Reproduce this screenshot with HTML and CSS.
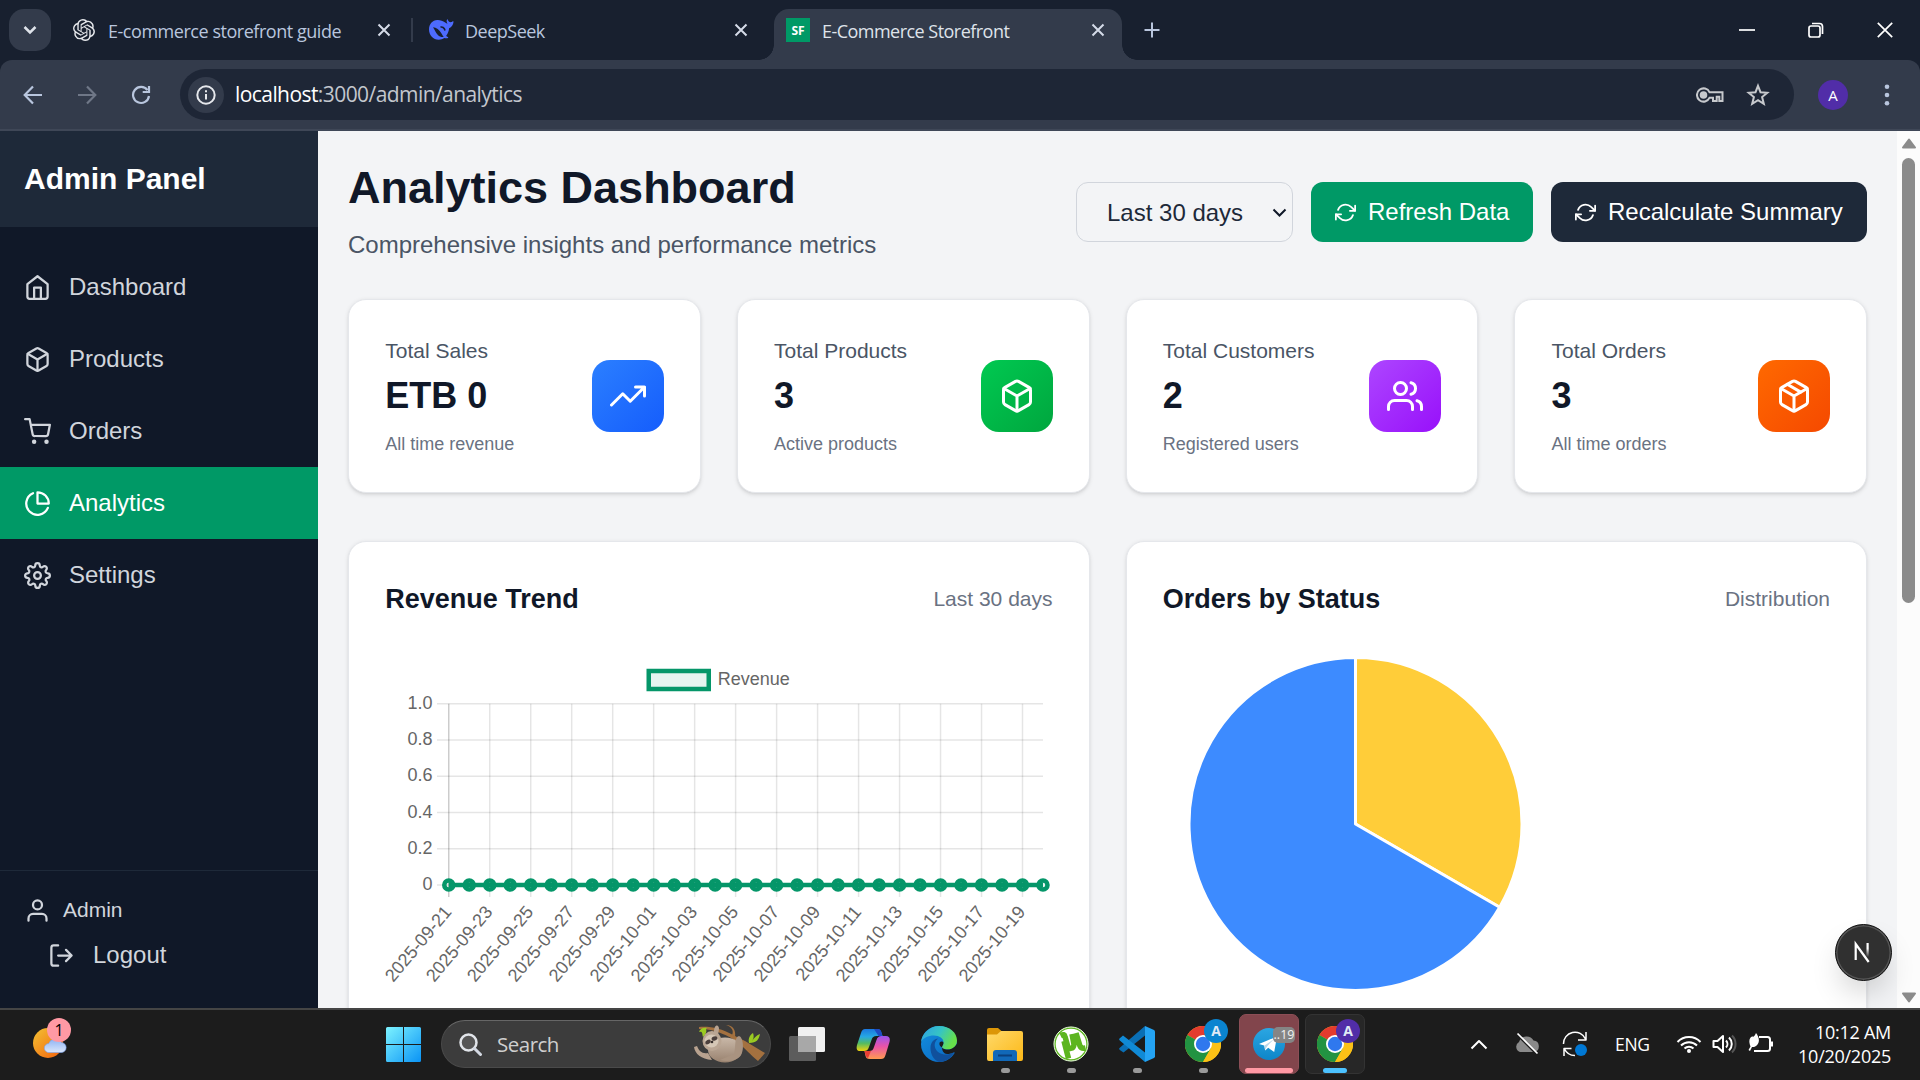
FILE: index.html
```html
<!DOCTYPE html>
<html lang="en">
<head>
<meta charset="utf-8">
<title>E-Commerce Storefront</title>
<link rel="stylesheet" href="styles.css">
</head>
<body>
<svg class="defs" width="0" height="0">
  <defs>
    <symbol id="i-x" viewBox="0 0 14 14"><path d="M1.500 1.500l11 11M12.500 1.500l-11 11"/></symbol>
    <symbol id="i-box" viewBox="0 0 24 24"><path d="M21 16V8a2 2 0 0 0-1-1.730l-7-4a2 2 0 0 0-2 0l-7 4A2 2 0 0 0 3 8v8a2 2 0 0 0 1 1.730l7 4a2 2 0 0 0 2 0l7-4A2 2 0 0 0 21 16z"/><path d="M3.270 6.960L12 12.010l8.730-5.050M12 22.080V12"/></symbol>
    <symbol id="i-refresh" viewBox="0 0 24 24"><path d="M23 4v6h-6M1 20v-6h6"/><path d="M3.510 9a9 9 0 0 1 14.850-3.360L23 10M1 14l4.640 4.360A9 9 0 0 0 20.490 15"/></symbol>
    <symbol id="i-chrome" viewBox="0 0 36 36">
      <circle cx="18" cy="18" r="18" fill="#fbc116"/>
      <path d="M18 18L2.400 9A18 18 0 0 1 33.600 9H18z" fill="#e33b2e"/>
      <path d="M2.400 9A18 18 0 0 0 18 36l7.800-13.500L18 18z" fill="#229342"/>
      <path d="M18 9h15.600A18 18 0 0 1 18 36l7.800-13.500z" fill="#fbc116"/>
      <circle cx="18" cy="18" r="9" fill="#fff"/><circle cx="18" cy="18" r="7.200" fill="#2f78ee"/>
    </symbol>
    <linearGradient id="g-win" x1="0" y1="0" x2="1" y2="1"><stop offset="0" stop-color="#7df3ff"/><stop offset="1" stop-color="#0a93f5"/></linearGradient>
    <linearGradient id="g-sun" x1="0" y1="0" x2="1" y2="1"><stop offset="0" stop-color="#f3c233"/><stop offset="1" stop-color="#f2600c"/></linearGradient>
    <linearGradient id="g-cloud" x1="0" y1="0" x2="0" y2="1"><stop offset="0" stop-color="#8fb3f3"/><stop offset="1" stop-color="#dbe7fb"/></linearGradient>
    <linearGradient id="g-cpa" x1="0" y1="0" x2="0" y2="1"><stop offset="0" stop-color="#1b78e0"/><stop offset=".35" stop-color="#26a8e4"/><stop offset=".65" stop-color="#54bb62"/><stop offset="1" stop-color="#f2d30c"/></linearGradient>
    <linearGradient id="g-cpb" x1="0" y1="0" x2="0" y2="1"><stop offset="0" stop-color="#9a55ee"/><stop offset=".45" stop-color="#e953a8"/><stop offset="1" stop-color="#ff9a50"/></linearGradient>
    <linearGradient id="g-edge" x1="0" y1="0" x2="1" y2=".4"><stop offset="0" stop-color="#2d9fe6"/><stop offset=".55" stop-color="#36c4c4"/><stop offset="1" stop-color="#67e04a"/></linearGradient>
    <linearGradient id="g-edge2" x1="0" y1="0" x2="1" y2="1"><stop offset="0" stop-color="#1390df"/><stop offset="1" stop-color="#0a64bf"/></linearGradient>
    <linearGradient id="g-fold" x1="0" y1="0" x2="1" y2="1"><stop offset="0" stop-color="#ffd96a"/><stop offset="1" stop-color="#fcb817"/></linearGradient>
    <linearGradient id="g-tg" x1="0" y1="0" x2="0" y2="1"><stop offset="0" stop-color="#2ba6e2"/><stop offset="1" stop-color="#0d86c9"/></linearGradient>
    <linearGradient id="g-fur" x1="0" y1="0" x2="0" y2="1"><stop offset="0" stop-color="#c9b8a8"/><stop offset="1" stop-color="#99826f"/></linearGradient>
    <linearGradient id="g-n" x1="0" y1="0" x2="0" y2="1"><stop offset="0" stop-color="#fff"/><stop offset=".4" stop-color="#fff"/><stop offset="1" stop-color="#fff" stop-opacity="0"/></linearGradient>
  </defs>
</svg>

<header class="browser">
  <div class="tabstrip">
    <div class="tab-search"><svg width="14" height="10" viewBox="0 0 14 10"><path d="M1.500 2l5.500 5.500L12.500 2"/></svg></div>
    <div class="tab tab-first">
      <svg class="fav gpt" width="22" height="22" viewBox="0 0 24 24"><path d="M22.280 9.820a5.980 5.980 0 0 0-.52-4.910 6.050 6.050 0 0 0-6.510-2.900A6.070 6.070 0 0 0 4.980 4.180a5.980 5.980 0 0 0-4 2.900 6.050 6.050 0 0 0 .74 7.100 5.980 5.980 0 0 0 .51 4.910 6.050 6.050 0 0 0 6.510 2.900A5.980 5.980 0 0 0 13.260 24a6.060 6.060 0 0 0 5.770-4.210 5.990 5.990 0 0 0 4-2.900 6.060 6.060 0 0 0-.75-7.070zm-9.020 12.610a4.480 4.480 0 0 1-2.880-1.040l.14-.08 4.780-2.760a.8.8 0 0 0 .39-.68v-6.740l2.020 1.170a.07.07 0 0 1 .04.05v5.580a4.500 4.500 0 0 1-4.490 4.500zM3.600 18.300a4.470 4.470 0 0 1-.54-3.010l.14.08 4.780 2.760a.77.77 0 0 0 .78 0l5.840-3.370v2.330a.08.08 0 0 1-.03.06L9.740 19.950a4.500 4.500 0 0 1-6.140-1.650zM2.340 7.900a4.490 4.490 0 0 1 2.370-1.970V11.600a.77.77 0 0 0 .39.680l5.810 3.350-2.020 1.170a.08.08 0 0 1-.07 0l-4.830-2.790A4.500 4.500 0 0 1 2.340 7.870zm16.600 3.860l-5.840-3.390L15.120 7.200a.08.08 0 0 1 .07 0l4.830 2.790a4.490 4.490 0 0 1-.68 8.100v-5.680a.79.79 0 0 0-.4-.65zm2.010-3.020l-.14-.09-4.770-2.780a.78.78 0 0 0-.79 0L9.410 9.230V6.900a.07.07 0 0 1 .03-.06l4.830-2.790a4.500 4.500 0 0 1 6.680 4.660zM8.310 12.860l-2.020-1.160a.08.08 0 0 1-.04-.06V6.070a4.500 4.500 0 0 1 7.380-3.450l-.14.08L8.700 5.460a.8.8 0 0 0-.39.680zm1.100-2.360L12 9l2.600 1.500v3L12 15l-2.600-1.500z"/></svg>
      <span class="tab-title t1">E-commerce storefront guide</span>
      <svg class="close"><use href="#i-x"/></svg>
    </div>
    <div class="tab-sep"></div>
    <div class="tab tab-second">
      <svg class="fav" width="25" height="22" viewBox="0 0 25 22"><path d="M24.300 2.300c-.4-.2-1.200.6-1.900.8-1.700.3-2.700-.5-3.400-1.900-.2-.7-.5-1.100-.8-.9-.9.900-.7 3.100.3 4.400-.8-.1-1.500-.6-2.300-1.200C13.900 1.800 11.200.9 8.300 1 3.400 1.200 0 5 0 10.500 0 16.300 4.300 20.800 9.700 20.800c2.200 0 4-.5 5.500-1.700 1.500.3 3 .3 3.800-.2.500-.4.300-.7-.2-.9-.8-.3-1.300-.7-1.600-1.300 1.800-2.200 2.700-4.800 2.900-7.400 2.500-1 4.100-3.200 4.400-6.200 0-.4 0-.7-.2-.8z" fill="#4d6bfe"/><path d="M4 8.200c3.300.2 6.400 2.600 8.500 6.200 1.100 1.800 1.700 2.900 2.300 3.600-2.300.4-4.200-.4-5.900-2C6.700 13.900 5.800 10.600 4 8.200z" fill="#18202f"/><path d="M11.500 8.300c1.400-.8 4 .2 4.500 3.200" stroke="#18202f" stroke-width="1.600" fill="none"/></svg>
      <span class="tab-title t2">DeepSeek</span>
      <svg class="close"><use href="#i-x"/></svg>
    </div>
    <div class="tab tab-active">
      <span class="fav-sf">SF</span>
      <span class="tab-title t3">E-Commerce Storefront</span>
      <svg class="close"><use href="#i-x"/></svg>
    </div>
    <svg class="newtab" width="16" height="16" viewBox="0 0 16 16"><path d="M8 0.500v15M.5 8h15"/></svg>
    <div class="winctl">
      <svg viewBox="0 0 16 16"><path d="M0 8h16"/></svg>
      <svg viewBox="0 0 16 16"><rect x="1" y="4" width="11" height="11" rx="2"/><path d="M4 1.500h7.500a3 3 0 0 1 3 3V12"/></svg>
      <svg viewBox="0 0 16 16"><path d="M.8.8l14.400 14.400M15.200.8L.8 15.200"/></svg>
    </div>
  </div>
  <div class="toolbar">
    <div class="navicons">
      <svg viewBox="0 0 20 20"><path d="M19 10H2M10 1.500L1.700 10l8.300 8.500"/></svg>
      <svg class="dim" viewBox="0 0 20 20"><path d="M1 10h17M10 1.500l8.300 8.500-8.300 8.500"/></svg>
      <svg viewBox="0 0 20 20"><path d="M16.500 5.200A8 8 0 1 0 18 11"/><path d="M18 1v6h-6.300" /></svg>
    </div>
    <div class="address">
      <span class="info"><svg width="20" height="20" viewBox="0 0 20 20"><circle cx="10" cy="10" r="8.700"/><path d="M10 9v5.500M10 5.200v2"/></svg></span>
      <span class="url"><b>localhost</b>:3000/admin/analytics</span>
      <svg class="key" width="28" height="18" viewBox="0 0 28 18"><path d="M13.600 6.300H26.500V15h-3.200v-4.200h-2.600V15h-3.700v-3.300h-3.400a6.600 6.600 0 1 1 0-5.400z"/><circle cx="7.500" cy="9" r="2.800" fill="#c7c9cd"/></svg>
      <svg class="star" width="24" height="24" viewBox="0 0 24 24"><path d="M12 2.800l2.500 6.400 6.800.5-5.200 4.400 1.700 6.700L12 17.100l-5.800 3.700 1.700-6.700-5.200-4.400 6.800-.5z"/></svg>
    </div>
    <span class="avatar">A</span>
    <svg class="dots" width="6" height="22" viewBox="0 0 6 22"><circle cx="3" cy="2.700" r="2.300"/><circle cx="3" cy="11" r="2.300"/><circle cx="3" cy="19.300" r="2.300"/></svg>
  </div>
</header>

<div class="page">
  <aside class="sidebar">
    <div class="brand">Admin Panel</div>
    <nav class="nav">
      <a><svg class="ic" viewBox="0 0 24 24"><path d="M3 9l9-7 9 7v11a2 2 0 0 1-2 2H5a2 2 0 0 1-2-2z"/><path d="M9 22V12h6v10"/></svg>Dashboard</a>
      <a><svg class="ic"><use href="#i-box"/></svg>Products</a>
      <a><svg class="ic" viewBox="0 0 24 24"><circle cx="9" cy="21" r="1"/><circle cx="20" cy="21" r="1"/><path d="M1 1h4l2.680 13.390a2 2 0 0 0 2 1.610h9.720a2 2 0 0 0 2-1.610L23 6H6"/></svg>Orders</a>
      <a class="active"><svg class="ic" viewBox="0 0 24 24"><path d="M21.210 15.890A10 10 0 1 1 8 2.830"/><path d="M22 12A10 10 0 0 0 12 2v10z"/></svg>Analytics</a>
      <a><svg class="ic" viewBox="0 0 24 24"><circle cx="12" cy="12" r="3"/><path d="M19.400 15a1.650 1.650 0 0 0 .33 1.820l.06.06a2 2 0 0 1 0 2.830 2 2 0 0 1-2.830 0l-.06-.06a1.650 1.650 0 0 0-1.820-.33 1.650 1.650 0 0 0-1 1.510V21a2 2 0 0 1-2 2 2 2 0 0 1-2-2v-.09A1.650 1.650 0 0 0 9 19.400a1.650 1.650 0 0 0-1.820.33l-.06.06a2 2 0 0 1-2.830 0 2 2 0 0 1 0-2.830l.06-.06a1.650 1.650 0 0 0 .33-1.820 1.650 1.650 0 0 0-1.510-1H3a2 2 0 0 1-2-2 2 2 0 0 1 2-2h.09A1.650 1.650 0 0 0 4.600 9a1.650 1.650 0 0 0-.33-1.820l-.06-.06a2 2 0 0 1 0-2.830 2 2 0 0 1 2.830 0l.06.06a1.650 1.650 0 0 0 1.820.33H9a1.650 1.650 0 0 0 1-1.510V3a2 2 0 0 1 2-2 2 2 0 0 1 2 2v.09a1.650 1.650 0 0 0 1 1.510 1.650 1.650 0 0 0 1.820-.33l.06-.06a2 2 0 0 1 2.830 0 2 2 0 0 1 0 2.830l-.06.06a1.650 1.650 0 0 0-.33 1.820V9a1.650 1.650 0 0 0 1.510 1H21a2 2 0 0 1 2 2 2 2 0 0 1-2 2h-.09a1.650 1.650 0 0 0-1.510 1z"/></svg>Settings</a>
    </nav>
    <div class="account">
      <div class="who"><svg class="ic" viewBox="0 0 24 24"><path d="M20 21v-2a4 4 0 0 0-4-4H8a4 4 0 0 0-4 4v2"/><circle cx="12" cy="7" r="4"/></svg>Admin</div>
      <div class="logout"><svg class="ic" viewBox="0 0 24 24"><path d="M9 21H5a2 2 0 0 1-2-2V5a2 2 0 0 1 2-2h4M16 17l5-5-5-5M21 12H9"/></svg>Logout</div>
    </div>
  </aside>

  <main class="main">
    <div class="head">
      <div>
        <h1>Analytics Dashboard</h1>
        <p class="sub">Comprehensive insights and performance metrics</p>
      </div>
      <div class="actions">
        <div class="select">Last 30 days<svg width="15" height="10" viewBox="0 0 15 10"><path d="M1.500 1.500l6 6 6-6"/></svg></div>
        <div class="btn green"><svg class="ic"><use href="#i-refresh"/></svg>Refresh Data</div>
        <div class="btn dark"><svg class="ic"><use href="#i-refresh"/></svg>Recalculate Summary</div>
      </div>
    </div>

    <div class="stats">
      <div class="card stat"><div><div class="label">Total Sales</div><div class="value">ETB 0</div><div class="note">All time revenue</div></div>
        <div class="tile blue"><svg class="ic" viewBox="0 0 24 24"><path d="M23 6l-9.500 9.500-5-5L1 18M17 6h6v6"/></svg></div></div>
      <div class="card stat"><div><div class="label">Total Products</div><div class="value">3</div><div class="note">Active products</div></div>
        <div class="tile emerald"><svg class="ic"><use href="#i-box"/></svg></div></div>
      <div class="card stat"><div><div class="label">Total Customers</div><div class="value">2</div><div class="note">Registered users</div></div>
        <div class="tile purple"><svg class="ic" viewBox="0 0 24 24"><path d="M17 21v-2a4 4 0 0 0-4-4H5a4 4 0 0 0-4 4v2"/><circle cx="9" cy="7" r="4"/><path d="M23 21v-2a4 4 0 0 0-3-3.870M16 3.130a4 4 0 0 1 0 7.750"/></svg></div></div>
      <div class="card stat"><div><div class="label">Total Orders</div><div class="value">3</div><div class="note">All time orders</div></div>
        <div class="tile orange"><svg class="ic" viewBox="0 0 24 24"><path d="M16.500 9.400L7.500 4.210"/><path d="M21 16V8a2 2 0 0 0-1-1.730l-7-4a2 2 0 0 0-2 0l-7 4A2 2 0 0 0 3 8v8a2 2 0 0 0 1 1.730l7 4a2 2 0 0 0 2 0l7-4A2 2 0 0 0 21 16z"/><path d="M3.270 6.960L12 12.010l8.730-5.050M12 22.080V12"/></svg></div></div>
    </div>

    <div class="charts">
      <section class="card">
        <div class="card-head"><h2>Revenue Trend</h2><span>Last 30 days</span></div>
        <svg id="revenue" class="plot" width="668" height="352" viewBox="385 656 668 352"></svg>
      </section>
      <section class="card">
        <div class="card-head"><h2>Orders by Status</h2><span>Distribution</span></div>
        <svg class="plot" width="668" height="352" viewBox="1162.500 656 668 352">
          <g stroke="#fff" stroke-width="3" stroke-linejoin="round">
            <path d="M1355 824V657.500A166.500 166.500 0 0 1 1499.200 907.250Z" fill="#ffcd39"/>
            <path d="M1355 824L1499.200 907.250A166.500 166.500 0 1 1 1355 657.500Z" fill="#3d8bff"/>
          </g>
        </svg>
      </section>
    </div>
  </main>

  <div class="scrollbar">
    <svg width="16" height="11" viewBox="0 0 16 11"><path d="M8 1.500l6 8H2z"/></svg>
    <div class="thumb"></div>
    <svg class="down" width="16" height="11" viewBox="0 0 16 11"><path d="M8 9.500l6-8H2z"/></svg>
  </div>
  <div class="devbadge"><svg width="26" height="26" viewBox="0 0 26 26"><path d="M5.700 21V5L18.700 23" stroke="#fff" stroke-width="2.200" fill="none"/><rect x="16.500" y="4" width="2.200" height="14" fill="url(#g-n)"/></svg></div>
</div>

<footer class="taskbar">
  <div class="weather">
    <svg width="36" height="36" viewBox="0 0 36 36"><circle cx="15" cy="16" r="15" fill="url(#g-sun)"/><path d="M16 25.500a4.500 4.500 0 0 1-.3-9 7 7 0 0 1 12.600-1 5 5 0 0 1-.3 10z" fill="url(#g-cloud)" stroke="#7ba3ee" stroke-width=".6"/></svg>
    <span class="bubble">1</span>
  </div>
  <div class="apps">
    <svg class="win" width="35" height="35" viewBox="0 0 35 35"><path d="M1.500 0H17v17H0V1.500A1.500 1.500 0 0 1 1.500 0zM18 0h15.500A1.500 1.500 0 0 1 35 1.500V17H18zM0 18h17v17H1.500A1.500 1.500 0 0 1 0 33.500zM18 18h17v15.500a1.500 1.500 0 0 1-1.500 1.500H18z" fill="url(#g-win)"/></svg>
    <div class="search">
      <svg width="23" height="23" viewBox="0 0 23 23"><circle cx="9.500" cy="9.500" r="8" fill="#565656" stroke="#e2e5ea" stroke-width="2.500"/><path d="M15.500 15.500l6 6" stroke="#d3d8e2" stroke-width="3" stroke-linecap="round"/></svg>
      <span>Search</span>
      <svg class="sloth" width="72" height="40" viewBox="0 0 72 40">
        <path d="M5 3c10-1 22 1 34 8l12 6 20 12-7 8c-7-6-14-13-18-17C34 11 21 5 5 5z" fill="#a4713f"/>
        <path d="M38 11c2-4 0-8-6-10 7 0 10 5 9 12z" fill="#a4713f"/>
        <path d="M13 4c-4-1-7 1-8 4 4-1 3 2 4 5 3-3 4-5 3-8M55 19c-1-5 1-8 4-10 1 3 1 5-1 8 2-3 5-6 8-7-1 5-3 9-11 9z" fill="#9acb22"/>
        <path d="M20 8c0-8 5-8 5-3l-1 6h-5zM14 29C8 30 5 27 3 22l-3 1c1 7 7 12 18 13z" fill="#b8a28f"/>
        <ellipse cx="31" cy="26" rx="17" ry="12.500" fill="url(#g-fur)"/><path d="M40 30c2-7 0-17 5-18 5 1 6 19-1 22-4 3-11 4-18 2z" fill="#a99380"/>
        <ellipse cx="18" cy="17" rx="9.500" ry="10" fill="#baa694"/><ellipse cx="17.500" cy="17" rx="7" ry="6.500" fill="#d6c8b7"/>
        <ellipse cx="14" cy="18" rx="3" ry="2" fill="#4b3f3c" transform="rotate(-30 14 18)"/><ellipse cx="20.500" cy="14.500" rx="3" ry="2" fill="#4b3f3c" transform="rotate(-20 20.500 14.500)"/><circle cx="18" cy="18" r="1.300" fill="#352d2b"/>
      </svg>
    </div>
    <svg class="tv" width="36" height="34" viewBox="0 0 36 34"><rect y="9" width="27" height="25" rx="1.500" fill="#5c5c5c"/><rect x="9" width="27" height="25" rx="1.500" fill="#f0f0f0"/><rect x="9" y="9" width="18" height="16" fill="#a8a8a8"/></svg>
    <svg class="cp" width="34" height="32" viewBox="0 0 34 32"><path d="M9 1h12c3 0 3.500 1 4.500 4l1 3h-6c-3 0-4 1-5 4l-2.500 7c-1 3-2.500 4-5 4H4c-3 0-4-2-3-6L5 5c1-3 2-4 4-4z" fill="url(#g-cpa)"/><path d="M25 31H14c-3 0-4-1-4.700-4L8.500 23h4.500c3 0 4-1 5-4l2.500-7c1-3 2.500-4 5-4H30c3 0 4.500 2 3.500 6l-4 13c-1 3-2 4-4.500 4z" fill="url(#g-cpb)"/><path d="M18 1h4c2 0 3 1 3.700 4l.8 3h-4z" fill="#1d4bc4"/><path d="M8.500 23H15l-3 7c-1.500-.5-2-1.500-2.700-4z" fill="#e93f33"/></svg>
    <svg class="edge" width="36" height="36" viewBox="0 0 36 36"><circle cx="18" cy="18" r="18" fill="url(#g-edge2)"/><path d="M0 16C1 7 9 0 18 0c11 0 18 7 18 14.500 0 6-4.500 9-9 9-3 0-6-1-6-2.500 0-1 1.500-2 1.500-5 0-3.500-4-6.500-9.500-6.500C7 9.500 2 12 0 16z" fill="url(#g-edge)"/><path d="M9.500 22c0-6 4-9.500 7.500-9.500-3 2.500-4 5.500-3 9 1.500 5 7 7.500 12 7 2.500-.2 5-1 7-2C30 32 25 36 18 36 12.500 34 9.500 28 9.500 22z" fill="#10509c"/><path d="M21 21.500c-1.500-.7-3-2.500-2.500-4.500.5-2 4-2 4 0 0 2-1.700 3-1.500 4.500 1 1.500 3 2 6 2 4 0 7-2.500 9-6V28l-3-1.800c-2 1.200-5 1.800-7 1.800-3 0-5-3-5-6.500z" fill="#1c1c1c"/></svg>
    <div class="app"><svg width="36" height="33" viewBox="0 0 36 33"><path d="M0 2a2 2 0 0 1 2-2h9l4 3.500L11 9H0z" fill="#dc9607"/><path d="M0 6.500h10l4-3.500h20a2 2 0 0 1 2 2v26a2 2 0 0 1-2 2H2a2 2 0 0 1-2-2z" fill="url(#g-fold)"/><path d="M6 33v-8a3 3 0 0 1 3-3h18a3 3 0 0 1 3 3v8z" fill="#1168b8"/><path d="M11 27.500h14" stroke="#0b3f7c" stroke-width="2"/></svg></div>
    <div class="app"><svg width="36" height="36" viewBox="0 0 36 36"><circle cx="18" cy="18" r="16.300" fill="#fff" stroke="#5cb51f" stroke-width="2"/><path d="M7.500 9.500c3-1.500 4-1 4.500 1l2.500 9c1 4 6 4 6.500-1L19 8M23 7l4 13c.8 2 3 2.500 5.500 2M11 15l4.500 17.500" stroke="#5cb51f" stroke-width="5.500" fill="none"/><circle cx="18" cy="18" r="17" fill="none" stroke="#eef6e8" stroke-width="1"/></svg></div>
    <div class="app"><svg width="36" height="36" viewBox="0 0 36 36"><path d="M26 0v9.500L4.500 26.500.8 24a1.500 1.500 0 0 1 0-2.300z" fill="#0a6fb5"/><path d="M26 36L.8 14.500a1.500 1.500 0 0 1 0-2.300L4 9.500 26 26.500z" fill="#108ad6"/><path d="M26 0l9 4a2 2 0 0 1 1 1.700v24.600a2 2 0 0 1-1 1.700l-9 4z" fill="#24a3f3"/></svg></div>
    <div class="app"><svg width="36" height="36"><use href="#i-chrome"/></svg><span class="profile p-blue">A</span></div>
    <div class="app tg"><svg width="32" height="32" viewBox="0 0 32 32"><circle cx="16" cy="16" r="16" fill="url(#g-tg)"/><path d="M6 16L24 8.500l-2.800 15.500-6-4.300-3 2.800-1-5z" fill="#fff"/><path d="M12 22l-.5-4.500 9-6-6.500 7z" fill="#b9d8ea"/></svg><span class="count">..19</span></div>
    <div class="app cur"><svg width="36" height="36"><use href="#i-chrome"/></svg><span class="profile p-purple">A</span></div>
  </div>
  <div class="tray">
    <svg class="t-up" width="18" height="12" viewBox="0 0 18 12"><path d="M1.500 10.500L9 3l7.500 7.500"/></svg>
    <svg class="t-cloud" width="26" height="24" viewBox="0 0 26 24"><path d="M6 20a5.500 5.500 0 0 1-1-10 8 8 0 0 1 14.500-1.500A5.800 5.800 0 0 1 20 20z" fill="#8a8a8a" stroke="none"/><path d="M4 3.500l19 19" stroke="#1c1c1c" stroke-width="2"/><path d="M3.500 1.500l20 20" stroke-width="1.700"/></svg>
    <svg class="t-sync" width="26" height="26" viewBox="0 0 26 26"><path d="M1.500 13A11.500 11.500 0 0 1 23.500 8M24 1v8h-8M13 24.500A11.500 11.500 0 0 1 2.500 18M2 25v-7.500h7.500" stroke-width="1.500"/><circle cx="19" cy="19" r="6" fill="#0078d4" stroke="none"/></svg>
    <span class="lang">ENG</span>
    <svg class="t-wifi" width="26" height="20" viewBox="0 0 26 20"><path d="M1.500 8a16 16 0 0 1 23 0M5 11.500a11.500 11.500 0 0 1 16 0M8.500 14.500a6.500 6.500 0 0 1 9 0"/><circle cx="13" cy="17" r="2" fill="#fff" stroke="none"/></svg>
    <svg class="t-vol" width="26" height="20" viewBox="0 0 26 20"><path d="M1.500 7v6h4L11 18V2L5.500 7zM14 6.500a5 5 0 0 1 0 7M17 3.500a9 9 0 0 1 0 13"/><path d="M20 1.500a12 12 0 0 1 0 17" stroke="#555"/></svg>
    <svg class="t-bat" width="26" height="22" viewBox="0 0 26 22"><path d="M11 4h8.500a2.500 2.500 0 0 1 2.500 2.500v9a2.500 2.500 0 0 1-2.500 2.500H6"/><path d="M23.500 8.500v5" stroke-width="3"/><path d="M8 0c3 4 4 8 1.500 11.500-2 3-4.500 2.500-5.500 2.500l-2 4-1.500-1 2-3.500C-.5 6 3 3 5 3.500c0 1 2-1 3-3.500z" fill="#fff" stroke="none"/></svg>
    <div class="clock"><div>10:12 AM</div><div>10/20/2025</div></div>
  </div>
</footer>
<script src="script.js"></script>
</body>
</html>
```

FILE: script.js
```js
// Draws the revenue line chart: 30 daily points, every second date labelled.
const svg = document.getElementById('revenue');
const left = 448.75, right = 1043, top_ = 703.75, bottom = 885;
const values = new Array(30).fill(0);
const step = (right - left) / (values.length - 1);
const start = Date.UTC(2025, 8, 21);
const out = [];

['1.0', '0.8', '0.6', '0.4', '0.2', '0'].forEach((label, i) => {
  const y = top_ + (bottom - top_) * i / 5;
  out.push(`<path class="grid" d="M437 ${y}H${right}"/>`);
  out.push(`<text class="axis" x="432.500" y="${y + 5}" text-anchor="end">${label}</text>`);
});

values.forEach((v, i) => {
  if (i % 2) return;
  const x = left + step * i;
  const date = new Date(start + i * 864e5).toISOString().slice(0, 10);
  out.push(`<path class="grid${i ? '' : ' first'}" d="M${x} ${top_}V897"/>`);
  out.push(`<text class="axis" text-anchor="end" transform="translate(${x - 1} 908.5) rotate(-50)" dy="6">${date}</text>`);
});

const py = v => bottom - v * (bottom - top_);
out.push(`<polyline class="line" points="${values.map((v, i) => `${left + step * i},${py(v)}`).join(' ')}"/>`);
values.forEach((v, i) => out.push(`<circle class="point" cx="${left + step * i}" cy="${py(v)}" r="4.5"/>`));
out.push('<rect class="legend" x="648.75" y="671" width="60" height="18"/>');
out.push('<text class="axis" x="717.75" y="685">Revenue</text>');
svg.innerHTML = out.join('');
```

FILE: styles.css
```css
* { box-sizing: border-box; margin: 0; padding: 0; }
body { width: 1920px; height: 1080px; overflow: hidden; display: flex; flex-direction: column; font-family: "Liberation Sans", Arial, sans-serif; color: #101828; }
svg { display: block; flex: none; }
.defs { position: absolute; }
.ic { fill: none; stroke: currentColor; stroke-width: 2; stroke-linecap: round; stroke-linejoin: round; width: 27px; height: 27px; }

/* Browser chrome */
.browser { height: 131px; flex: none; background: #18202f; font-family: "Open Sans", "Noto Sans", sans-serif; }
.tabstrip { height: 60px; display: flex; align-items: center; padding-left: 9px; }
.tab-search { width: 42px; height: 42px; border-radius: 15px; background: #333b4b; display: flex; align-items: center; justify-content: center; }
.tab-search path { fill: none; stroke: #dfe3ea; stroke-width: 2.5; }
.tab { display: flex; align-items: center; height: 60px; }
.tab-first { width: 360px; padding: 0 20px 0 22px; }
.tab-second { width: 361px; padding: 0 26px 0 16px; }
.tab-active { width: 348px; height: 51px; align-self: flex-end; padding: 0 17px 9px 12px; background: #333b4b; border-radius: 15px 15px 0 0; position: relative; }
.tab-active::before, .tab-active::after { content: ""; position: absolute; bottom: 0; width: 15px; height: 15px; }
.tab-active::before { left: -15px; background: radial-gradient(circle at 0 0, transparent 14.5px, #333b4b 15px); }
.tab-active::after { right: -15px; background: radial-gradient(circle at 100% 0, transparent 14.5px, #333b4b 15px); }
.tab-sep { width: 2px; height: 24px; background: #333b4b; }
.gpt { fill: #e4e6ea; }
.tab-title { flex: 1; font-size: 18px; color: #b9c6de; white-space: nowrap; padding-top: 2px; }
.t1 { margin-left: 13px; letter-spacing: -.46px; }
.t2 { margin-left: 11px; letter-spacing: -.5px; }
.t3 { margin-left: 12px; color: #dfe3ea; letter-spacing: -.53px; }
.fav-sf { width: 24px; height: 24px; background: #009966; color: #fff; font-size: 12px; font-weight: 700; display: flex; align-items: center; justify-content: center; }
.close { width: 14px; height: 14px; stroke: #d5dbe8; stroke-width: 2; }
.newtab { margin-left: 22px; stroke: #b9c6de; stroke-width: 2; }
.winctl { margin-left: auto; margin-right: 27px; display: flex; gap: 53px; }
.winctl svg { width: 16px; height: 16px; fill: none; stroke: #fff; stroke-width: 1.7; }
.toolbar { height: 71px; background: #333b4b; border-bottom: 2px solid #3f4757; border-radius: 12px 12px 0 0; display: flex; align-items: center; padding-left: 23px; }
.navicons { display: flex; gap: 34px; width: 157px; }
.navicons svg { width: 20px; height: 20px; fill: none; stroke: #b9c6de; stroke-width: 2.2; }
.navicons .dim { stroke: #6f7787; }
.address { width: 1614px; height: 51px; border-radius: 26px; background: #1e2636; display: flex; align-items: center; padding: 0 24px 0 8px; }
.info { width: 36px; height: 36px; border-radius: 50%; background: #333b4b; display: flex; align-items: center; justify-content: center; }
.info svg { fill: none; stroke: #e6e8ec; stroke-width: 2; }
.url { flex: 1; margin: -1px 0 0 11px; font-size: 21px; letter-spacing: -.57px; color: #c3c7ce; }
.url b { font-weight: 400; color: #fff; }
.key { fill: none; stroke: #c7c9cd; stroke-width: 2; }
.star { margin-left: 22px; fill: none; stroke: #c7c9cd; stroke-width: 2; }
.avatar { width: 30px; height: 30px; margin-left: 24px; border-radius: 50%; background: #512da8; color: #fff; font-size: 15px; display: flex; align-items: center; justify-content: center; }
.dots { margin-left: 36px; fill: #b9c6de; }

/* Page */
.page { flex: 1; min-height: 0; display: flex; overflow: hidden; background: #f3f4f6; position: relative; }
.sidebar { width: 318px; background: #101828; color: #d1d5dc; display: flex; flex-direction: column; flex: none; }
.brand { height: 96px; background: #1e2939; color: #fff; font-size: 30px; font-weight: 700; line-height: 95px; padding-left: 24px; }
.nav { padding-top: 24px; flex: 1; }
.nav a { height: 72px; display: flex; align-items: center; gap: 18px; padding-left: 24px; font-size: 24px; }
.nav .active { background: #009966; color: #fff; }
.account { height: 138px; border-top: 1px solid #1e2939; padding: 24px; }
.who { display: flex; align-items: center; gap: 12px; font-size: 21px; height: 30px; }
.logout { display: flex; align-items: center; gap: 18px; font-size: 24px; height: 36px; margin: 12px 0 0 24px; }

.main { flex: 1; min-width: 0; padding: 30px 30px 0; overflow: hidden; }
.head { display: flex; justify-content: space-between; align-items: center; height: 102px; }
h1 { font-size: 45px; line-height: 54px; }
.sub { margin-top: 12px; font-size: 24px; line-height: 36px; color: #4a5565; }
.actions { display: flex; gap: 18px; }
.select, .btn { height: 60px; border-radius: 12px; font-size: 24px; display: flex; align-items: center; white-space: nowrap; }
.select { width: 217px; border: 1px solid #d1d5dc; padding: 1px 5px 0 30px; justify-content: space-between; color: #1e2939; }
.select path { fill: none; stroke: #101828; stroke-width: 2; }
.btn { gap: 12px; padding-left: 24px; color: #fff; }
.btn .ic { width: 21px; height: 21px; }
.green { width: 222px; background: #009966; }
.dark { width: 316px; background: #1e2939; }

.card { background: #fff; border: 1px solid #e5e7eb; border-radius: 18px; box-shadow: 0 1.5px 4.5px rgba(0,0,0,.1), 0 1.5px 3px -1.5px rgba(0,0,0,.1); padding: 36px 36px 36px 36.3px; }
.stats { display: grid; grid-template-columns: repeat(4, minmax(0, 1fr)); gap: 36px; margin-top: 36px; }
.stat { height: 194px; display: flex; justify-content: space-between; align-items: center; }
.label { font-size: 21px; line-height: 30px; color: #4a5565; }
.value { font-size: 36px; line-height: 48px; font-weight: 700; margin: 6px 0 12px; }
.note { font-size: 18px; line-height: 24px; color: #6a7282; }
.tile { width: 72px; height: 72px; border-radius: 18px; color: #fff; display: flex; align-items: center; justify-content: center; }
.tile .ic { width: 36px; height: 36px; }
.blue { background: linear-gradient(135deg, #2b7fff, #155dfc); }
.emerald { background: linear-gradient(135deg, #00c951, #00a63e); }
.purple { background: linear-gradient(135deg, #ad46ff, #9810fa); }
.orange { background: linear-gradient(135deg, #ff6900, #f54900); }
.charts { display: grid; grid-template-columns: repeat(2, minmax(0, 1fr)); gap: 36px; margin-top: 48px; }
.charts .card { height: 520px; }
.card-head { display: flex; justify-content: space-between; align-items: center; height: 42px; margin-bottom: 36px; font-size: 21px; color: #6a7282; }
h2 { font-size: 27px; color: #101828; }
.plot { overflow: visible; margin-left: -.3px; }
.grid { stroke: rgba(0,0,0,.1); stroke-width: 1.5; fill: none; }
.grid.first { stroke: rgba(0,0,0,.2); }
.axis { font-size: 18px; fill: #666; }
.line { fill: none; stroke: #059669; stroke-width: 4.5; }
.point, .legend { fill: rgba(5,150,105,.1); stroke: #059669; stroke-width: 4.5; }

.scrollbar { width: 23px; background: #fcfcfc; display: flex; flex-direction: column; align-items: center; padding: 7px 0 5px; flex: none; }
.scrollbar svg { fill: #8b8b8b; stroke: #8b8b8b; stroke-width: 2; stroke-linejoin: round; }
.thumb { width: 13px; height: 445px; margin-top: 9px; border-radius: 7px; background: #8b8b8b; }
.down { margin-top: auto; }
.devbadge { position: absolute; left: 1834.5px; top: 792.5px; width: 57px; height: 57px; border-radius: 50%; background: #303030; border: 1.5px solid #111; box-shadow: inset 0 0 0 1.5px #555, 0 16px 32px -8px rgba(0,0,0,.24); display: flex; align-items: center; justify-content: center; }

/* Taskbar */
.taskbar { height: 72px; flex: none; background: #1c1c1c; border-top: 2px solid #454545; display: flex; font-family: "Open Sans", "Noto Sans", sans-serif; color: #fff; position: relative; }
.weather { width: 386px; padding: 17px 0 0 33px; position: relative; }
.bubble { position: absolute; left: 47px; top: 8px; width: 24px; height: 24px; border-radius: 50%; background: #ff99a4; color: #000; font-size: 16px; line-height: 24px; text-align: center; }
.apps { display: flex; align-items: center; padding-bottom: 2px; }
.search { width: 330px; height: 48px; margin-left: 20px; border-radius: 24px; background: #3c3c3c; border: 1.5px solid #4a4a4a; border-top-color: #666; display: flex; align-items: center; padding: 0 4px 0 17px; font-size: 20.5px; color: #cfcfcf; letter-spacing: -.5px; }
.search span { flex: 1; margin: -1px 0 0 15px; }
.tv { margin-left: 18px; }
.cp { margin-left: 31px; }
.edge { margin: 0 21px 0 31px; }
.app { width: 60px; height: 60px; margin-right: 6px; border-radius: 7px; display: flex; align-items: center; justify-content: center; position: relative; }
.edge + .app { margin-left: -3px; }
.app::after { content: ""; position: absolute; bottom: 1px; left: 26px; width: 9px; height: 5px; border-radius: 3px; background: #9a9a9a; }
.tg { background: #82454c; border: 1px solid #8c4e56; }
.tg::after { left: 5px; width: 48px; bottom: 0; background: #ff99a4; }
.cur { background: #272727; border: 1.5px solid #333; }
.cur::after { left: 17px; width: 24px; bottom: 0; background: #4cc2ff; }
.profile { position: absolute; left: 31px; top: 5px; width: 24px; height: 24px; border-radius: 50%; color: #dfe9f5; font-size: 14px; font-weight: 700; line-height: 24px; text-align: center; }
.p-blue { background: #0a84d0; }
.p-purple { background: #512da8; top: 4px; left: 30px; }
.count { position: absolute; right: 3px; top: 12px; width: 22px; height: 16px; border-radius: 5px; background: #858585; color: #f2f2f2; font-size: 12.5px; line-height: 16px; text-align: center; }
.tray { margin-left: auto; display: flex; align-items: center; padding: 0 29px 2px 0; }
.tray svg { fill: none; stroke: #fff; stroke-width: 2; stroke-linejoin: round; }
.t-cloud { margin-left: 26px; }
.t-sync { margin-left: 22px; }
.lang { width: 35px; margin-left: 27px; font-size: 17.5px; letter-spacing: -.3px; }
.t-wifi { margin-left: 26px; }
.t-vol { margin-left: 10px; }
.t-bat { margin-left: 10px; }
.clock { width: 117px; margin-top: -1px; text-align: right; font-size: 18px; line-height: 24px; letter-spacing: -.26px; }
```
